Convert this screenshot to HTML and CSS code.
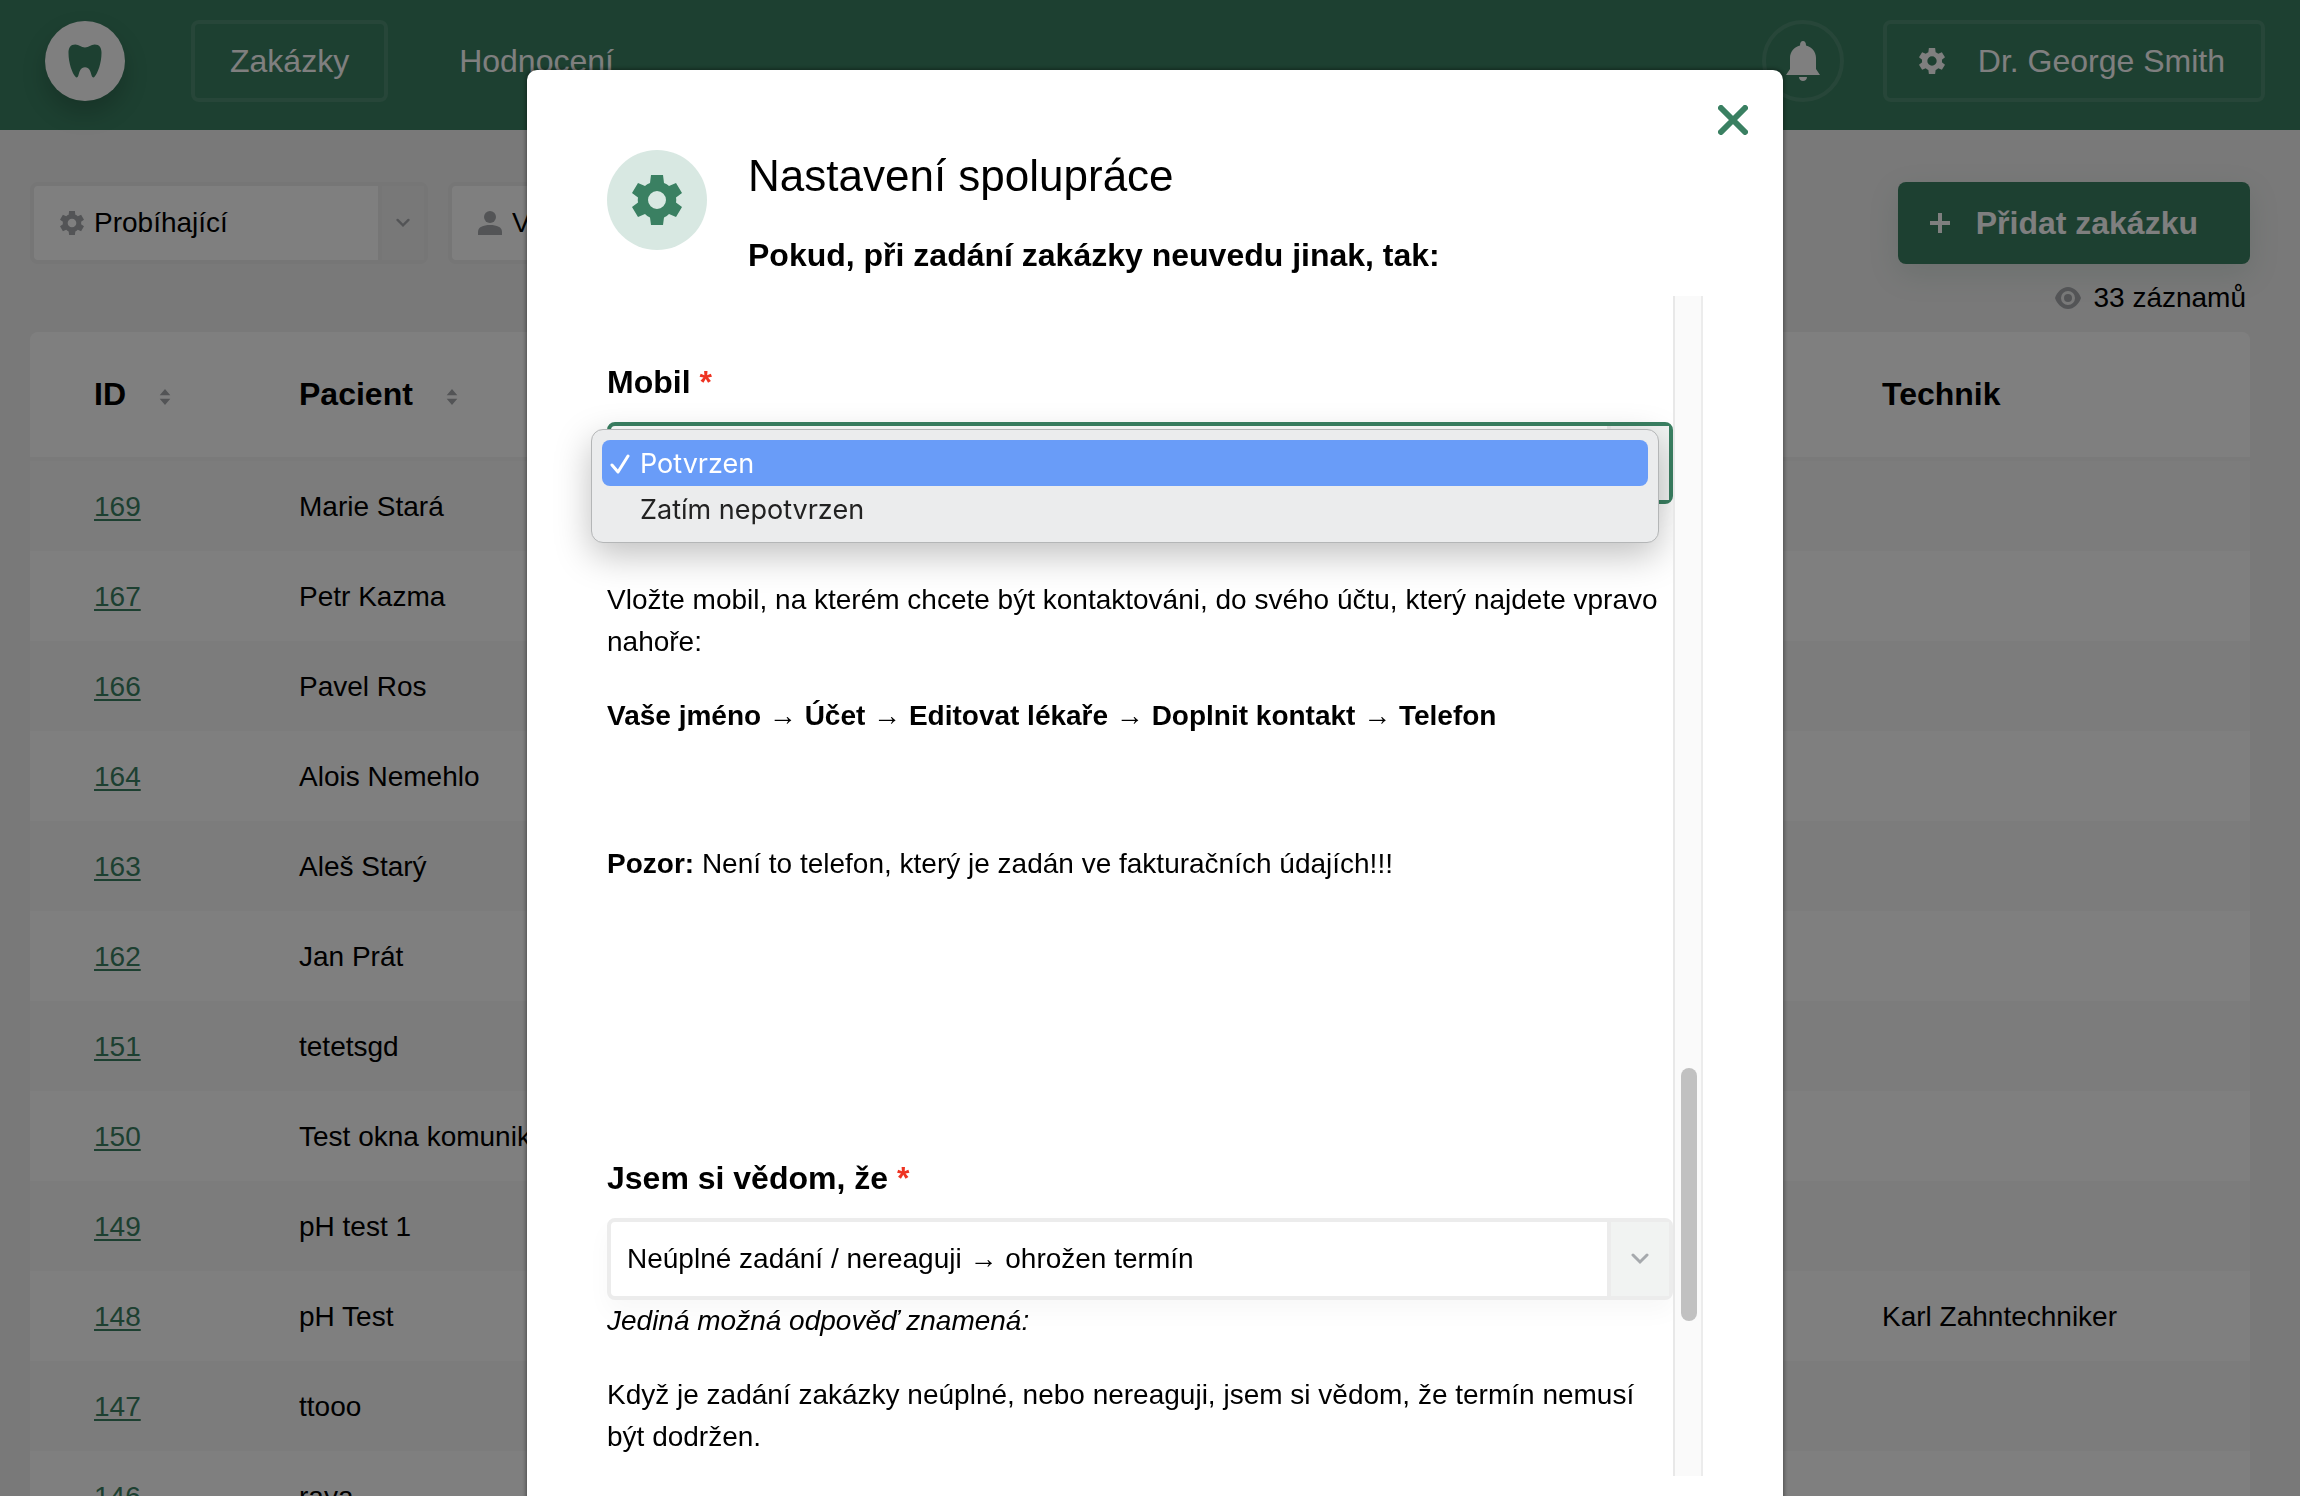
FILE: index.html
```html
<!DOCTYPE html>
<html lang="cs">
<head>
  <meta charset="utf-8">
  <meta name="viewport" content="width=device-width">
  <title>Zakázky</title>
  <link rel="stylesheet" href="styles.css">
</head>
<body>
  <!-- shared icons -->
  <svg class="sprite" aria-hidden="true">
    <symbol id="gear" viewBox="0 0 50 50">
      <path fill-rule="evenodd" d="M19 0H31L32 8Q35 9 37 11L44 8L50 18L44 22.500Q44.500 25 44 27.500L50 32L44 42L37 39Q35 41 32 42.500L31 50H19L18 42.500Q15 41 13 39L6 42L0 32L6 27.500Q5.500 25 6 22.500L0 18L6 8L13 11Q15 9 18 8ZM25 16A9 9 0 1 0 25 34A9 9 0 1 0 25 16Z"/>
    </symbol>
    <symbol id="chevron" viewBox="0 0 18 12">
      <path d="M2 2L9 9L16 2" fill="none" stroke="currentColor" stroke-width="3" stroke-linecap="round"/>
    </symbol>
    <symbol id="sort" viewBox="0 0 12 18">
      <path d="M0 7L6 0L12 7ZM0 11H12L6 18Z"/>
    </symbol>
  </svg>

  <header class="topbar">
    <a href="#" class="logo" aria-label="Domů">
      <svg width="34" height="34" viewBox="0 0 34 35"><path d="M17 3.500C13 3.500 11 .5 7 .5C2 .5 0 4 0 9C0 20 4 30 7 33.500C8 35 9.500 34.500 10 33C11.500 28 12.500 24 17 24S22.500 28 24 33C24.500 34.500 26 35 27 33.500C30 30 34 20 34 9C34 4 32 .5 27 .5C23 .5 21 3.500 17 3.500Z"/></svg>
    </a>
    <nav class="nav">
      <a href="#" class="nav-link active">Zakázky</a>
      <a href="#" class="nav-link">Hodnocení</a>
    </nav>
    <button class="bell" aria-label="Oznámení">
      <svg width="34" height="40" viewBox="0 0 34 40"><path d="M17 0C19 0 20 1.500 20 4.500C26 6 30 11 30 17V28L34 34H0L4 28V17C4 11 8 6 14 4.500C14 1.500 15 0 17 0ZM13 36H21C21 38.500 19 40 17 40S13 38.500 13 36Z"/></svg>
    </button>
    <button class="user">
      <svg width="26" height="26"><use href="#gear"/></svg>
      Dr. George Smith
    </button>
  </header>

  <main class="content">
    <div class="toolbar">
      <div class="select filter">
        <svg class="filter-icon" width="24" height="24"><use href="#gear"/></svg>
        <select aria-label="Stav"><option>Probíhající</option></select>
        <span class="select-arrow"><svg width="14" height="10"><use href="#chevron"/></svg></span>
      </div>
      <div class="select filter">
        <svg class="filter-icon" width="24" height="24" viewBox="0 0 24 24"><circle cx="12" cy="6" r="6"/><path d="M0 24V21C0 16 5 14 12 14S24 16 24 21V24Z"/></svg>
        <select aria-label="Lékař"><option>Všichni</option></select>
        <span class="select-arrow"><svg width="14" height="10"><use href="#chevron"/></svg></span>
      </div>
      <button class="add">
        <svg width="20" height="20" viewBox="0 0 20 20"><path d="M8 0H12V8H20V12H12V20H8V12H0V8H8Z"/></svg>
        Přidat zakázku
      </button>
    </div>
    <p class="count">
      <svg width="26" height="22" viewBox="0 0 26 22"><path fill-rule="evenodd" d="M13 0C19 0 24 5 26 11C24 17 19 22 13 22S2 17 0 11C2 5 7 0 13 0ZM13 4A7 7 0 1 0 13 18A7 7 0 1 0 13 4Z"/><circle cx="13" cy="11" r="4"/></svg>
      33 záznamů
    </p>

    <table class="orders">
      <colgroup>
        <col class="col-id">
        <col class="col-patient">
        <col class="col-technician">
      </colgroup>
      <thead>
        <tr>
          <th>ID <svg class="sort" width="12" height="16"><use href="#sort"/></svg></th>
          <th>Pacient <svg class="sort" width="12" height="16"><use href="#sort"/></svg></th>
          <th>Technik</th>
        </tr>
      </thead>
      <tbody>
        <tr><td><a href="#">169</a></td><td>Marie Stará</td><td></td></tr>
        <tr><td><a href="#">167</a></td><td>Petr Kazma</td><td></td></tr>
        <tr><td><a href="#">166</a></td><td>Pavel Ros</td><td></td></tr>
        <tr><td><a href="#">164</a></td><td>Alois Nemehlo</td><td></td></tr>
        <tr><td><a href="#">163</a></td><td>Aleš Starý</td><td></td></tr>
        <tr><td><a href="#">162</a></td><td>Jan Prát</td><td></td></tr>
        <tr><td><a href="#">151</a></td><td>tetetsgd</td><td></td></tr>
        <tr><td><a href="#">150</a></td><td>Test okna komunikace</td><td></td></tr>
        <tr><td><a href="#">149</a></td><td>pH test 1</td><td></td></tr>
        <tr><td><a href="#">148</a></td><td>pH Test</td><td>Karl Zahntechniker</td></tr>
        <tr><td><a href="#">147</a></td><td>ttooo</td><td></td></tr>
        <tr><td><a href="#">146</a></td><td>raya</td><td></td></tr>
      </tbody>
    </table>
  </main>

  <div class="overlay">
    <section class="modal" role="dialog" aria-labelledby="modal-title">
      <button class="close" aria-label="Zavřít">
        <svg width="30" height="30" viewBox="0 0 30 30"><path d="M3 3L27 27M27 3L3 27" stroke="currentColor" stroke-width="6" stroke-linecap="round"/></svg>
      </button>
      <div class="modal-head">
        <span class="modal-icon"><svg width="50" height="50"><use href="#gear"/></svg></span>
        <div>
          <h1 id="modal-title">Nastavení spolupráce</h1>
          <h2>Pokud, při zadání zakázky neuvedu jinak, tak:</h2>
        </div>
      </div>

      <div class="scroller">
        <form class="form">
          <div class="field">
            <label for="mobil">Mobil <span class="required">*</span></label>
            <div class="select open">
              <select id="mobil">
                <option>Potvrzen</option>
                <option>Zatím nepotvrzen</option>
              </select>
              <span class="select-arrow"><svg width="18" height="12"><use href="#chevron"/></svg></span>
              <ul class="options" role="listbox">
                <li class="selected" role="option" aria-selected="true">
                  <svg width="20" height="20" viewBox="0 0 20 20"><path d="M2 11L8 18L18 2" fill="none" stroke="currentColor" stroke-width="3" stroke-linecap="round" stroke-linejoin="round"/></svg>
                  Potvrzen
                </li>
                <li role="option" aria-selected="false">Zatím nepotvrzen</li>
              </ul>
            </div>
            <div class="hint">
              <p>Vložte mobil, na kterém chcete být kontaktováni, do svého účtu, který najdete vpravo nahoře:</p>
              <p><strong>Vaše jméno → Účet → Editovat lékaře → Doplnit kontakt → Telefon</strong></p>
              <p class="warning"><strong>Pozor:</strong> Není to telefon, který je zadán ve fakturačních údajích!!!</p>
            </div>
          </div>

          <div class="field">
            <label for="vedom">Jsem si vědom, že <span class="required">*</span></label>
            <div class="select">
              <select id="vedom"><option>Neúplné zadání / nereaguji → ohrožen termín</option></select>
              <span class="select-arrow"><svg width="18" height="12"><use href="#chevron"/></svg></span>
            </div>
            <p><em>Jediná možná odpověď znamená:</em></p>
            <p>Když je zadání zakázky neúplné, nebo nereaguji, jsem si vědom, že termín nemusí být dodržen.</p>
          </div>
        </form>
        <div class="track"><div class="thumb"></div></div>
      </div>
    </section>
  </div>
</body>
</html>
```
FILE: styles.css
```css
* {
  box-sizing: border-box;
}
body {
  margin: 0;
  height: 100vh;
  overflow: hidden;
  background-color: #f2f2f2;
  color: #000;
  font-family: "Liberation Sans", Arial, sans-serif;
  font-size: 28px;
  line-height: 42px;
}
svg {
  display: block;
  flex: none;
  fill: currentColor;
}
.sprite {
  display: none;
}
button, select {
  font: inherit;
  color: inherit;
  cursor: pointer;
}
h1, h2, p, ul {
  margin: 0;
  padding: 0;
}

/* top bar */
.topbar {
  display: flex;
  align-items: center;
  height: 130px;
  padding: 0 35px 8px 45px;
  background-color: #3a8062;
  color: #fff;
  font-size: 32px;
}
.logo {
  display: flex;
  align-items: center;
  justify-content: center;
  width: 80px;
  height: 80px;
  border-radius: 50%;
  background-color: #fff;
  color: #3a8062;
  box-shadow: 0 12px 24px rgba(0,0,0,0.2);
}
.nav {
  display: flex;
  gap: 32px;
  margin: 0 auto 0 66px;
}
.nav-link {
  padding: 16px 35px;
  border: 4px solid transparent;
  border-radius: 8px;
  color: #fff;
  text-decoration: none;
}
.nav-link.active,
.user,
.bell {
  border: 4px solid rgba(255,255,255,0.1);
}
.bell {
  display: flex;
  align-items: center;
  justify-content: center;
  width: 82px;
  height: 82px;
  margin-right: 39px;
  padding: 0;
  border-radius: 50%;
  background: none;
}
.user {
  display: flex;
  align-items: center;
  gap: 33px;
  padding: 16px 36px 16px 32px;
  border-radius: 8px;
  background: none;
}

/* toolbar */
.content {
  padding: 52px 50px 0 30px;
}
.toolbar {
  display: flex;
  gap: 20px;
}
.select {
  position: relative;
  display: flex;
  height: 82px;
  border: 4px solid #ececec;
  border-radius: 8px;
  background-color: #fff;
  box-shadow: 0 12px 24px rgba(0,0,0,0.03);
}
.select select {
  flex: 1;
  min-width: 0;
  padding: 0 16px;
  border: none;
  outline: none;
  background: none;
  appearance: none;
}
.select-arrow {
  display: flex;
  align-items: center;
  justify-content: center;
  width: 62px;
  border-left: 4px solid #ececec;
  background-color: #f1f3f2;
  color: #a6a9ad;
}
.filter {
  align-items: stretch;
  width: 398px;
  box-shadow: none;
}
.filter select {
  padding: 0 10px;
}
.filter .select-arrow {
  width: 46px;
  background-color: #f0f0f0;
}
.filter-icon {
  align-self: center;
  margin-left: 26px;
  color: #a6a9ad;
}
.add {
  display: flex;
  align-items: center;
  gap: 26px;
  height: 82px;
  margin-left: auto;
  padding: 0 52px 0 32px;
  border: none;
  border-radius: 8px;
  background-color: #3a8062;
  color: #fff;
  font-size: 32px;
  font-weight: bold;
  box-shadow: 0 10px 30px rgba(58,128,98,0.15);
}
.count {
  display: flex;
  align-items: center;
  justify-content: flex-end;
  gap: 12px;
  margin: 13px 4px;
}
.count svg {
  color: #a6a9ad;
}

/* table */
.orders {
  width: 100%;
  table-layout: fixed;
  border-collapse: separate;
  border-spacing: 0;
  border-radius: 8px;
  background-color: #fff;
  overflow: hidden;
}
.col-id {
  width: 205px;
}
.col-technician {
  width: 432px;
}
.orders th {
  height: 129px;
  padding: 0 0 2px 64px;
  border-bottom: 4px solid #f4f4f4;
  font-size: 32px;
  text-align: left;
}
.orders td {
  height: 90px;
  padding: 2px 0 0 64px;
}
.orders tbody tr:nth-child(odd) {
  background-color: #f9f9f9;
}
.orders a {
  color: #3a8062;
  text-underline-offset: 3px;
}
.sort {
  display: inline-block;
  margin-left: 24px;
  color: #a6a9ad;
}

/* modal */
.overlay {
  position: fixed;
  inset: 0;
  display: flex;
  justify-content: center;
  align-items: flex-start;
  padding: 70px 0 0 10px;
  background-color: rgba(0,0,0,0.5);
  overflow: hidden;
}
.modal {
  position: relative;
  width: 1256px;
  max-width: 100%;
  padding: 80px;
  border-radius: 10px;
  background-color: #fff;
  box-shadow: 0 0 4px 1px rgba(0,0,0,0.4);
}
.close {
  position: absolute;
  top: 35px;
  right: 35px;
  padding: 0;
  border: none;
  background: none;
  color: #3a8062;
}
.modal-head {
  display: flex;
  gap: 41px;
  height: 146px;
}
.modal-icon {
  display: flex;
  align-items: center;
  justify-content: center;
  width: 100px;
  height: 100px;
  border-radius: 50%;
  background-color: #d8e8e2;
  color: #3a8062;
}
h1 {
  font-size: 44px;
  font-weight: normal;
  line-height: 52px;
}
h2 {
  margin-top: 32px;
  font-size: 32px;
  line-height: 42px;
}
.scroller {
  display: flex;
  height: calc(100vh - 316px);
}
/* room on the left so the opened list is not clipped */
.form {
  flex: 1;
  margin-left: -80px;
  padding: 65px 0 0 80px;
  overflow: hidden;
}
.field {
  margin-bottom: 272px;
}
.field label {
  display: block;
  margin-bottom: 19px;
  font-size: 32px;
  font-weight: bold;
}
.required {
  color: #ee3322;
}
.field p {
  margin-bottom: 32px;
}
.hint {
  padding-top: 75px;
}
.field .warning {
  margin-top: 106px;
}
.track {
  display: grid;
  grid-template-rows: 772fr 253fr 155fr;
  width: 30px;
  padding: 0 4px 0 6px;
  border-left: 2px solid #e8e8e8;
  border-right: 2px solid #ececec;
  background-color: #fafafa;
}
.thumb {
  grid-row: 2;
  border-radius: 8px;
  background-color: #c1c1c1;
}

/* opened list */
.select.open {
  border-color: #3a8062;
}
.options {
  position: absolute;
  top: 3px;
  left: -20px;
  right: 10px;
  z-index: 1;
  padding: 10px;
  border: 1px solid #b4b6b7;
  border-radius: 12px;
  background-color: #ebeced;
  color: #222;
  font-family: Inter, "Liberation Sans", sans-serif;
  font-size: 27px;
  list-style: none;
  box-shadow: 0 12px 36px rgba(0,0,0,0.25);
}
.options li {
  display: flex;
  align-items: center;
  gap: 10px;
  height: 46px;
  padding: 2px 0 0 38px;
}
.options .selected {
  padding-left: 8px;
  border-radius: 8px;
  background-color: #699cf8;
  color: #fff;
}
```
